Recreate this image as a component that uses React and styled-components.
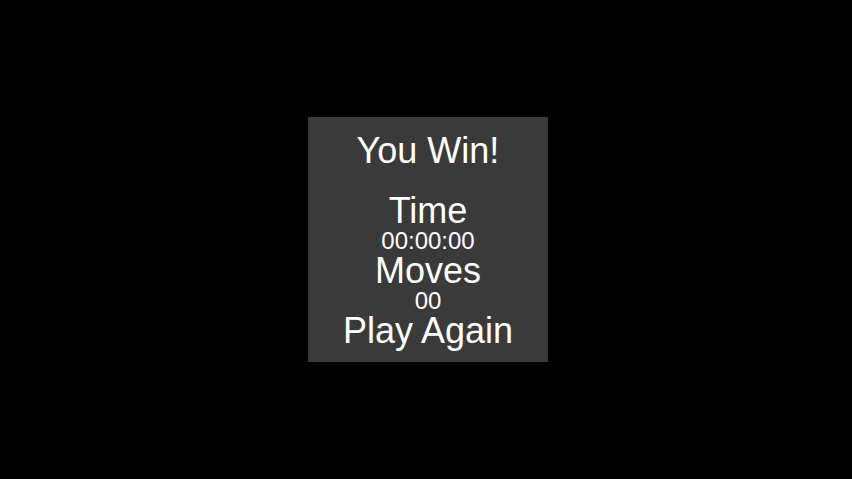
import React from 'react';
import styled, { createGlobalStyle } from 'styled-components';

const GlobalStyle = createGlobalStyle`
  html, body {
    margin: 0;
    padding: 0;
    background: #000;
  }
  body {
    font-family: 'Liberation Sans', Arial, sans-serif;
  }
`;

const Screen = styled.div`
  width: 100vw;
  height: 100vh;
  display: flex;
  align-items: center;
  justify-content: center;
  padding-left: 4px;
  box-sizing: border-box;
  background: #000;
`;

const Dialog = styled.div`
  width: 240px;
  box-sizing: border-box;
  padding: 16px 0 13px;
  background: #3a3a3a;
  color: #fff;
  display: flex;
  flex-direction: column;
  align-items: center;
  text-align: center;
`;

const Heading = styled.div`
  font-size: 36px;
  line-height: 36px;
  margin-bottom: ${(p) => (p.$spaced ? '24px' : '0')};
`;

const Value = styled.div`
  font-size: 24px;
  line-height: 24px;
`;

const PlayButton = styled.button`
  border: none;
  background: none;
  padding: 0;
  color: #fff;
  font-family: inherit;
  font-size: 36px;
  line-height: 36px;
  cursor: pointer;
`;

const App = ({ time = '00:00:00', moves = '00', onRestart }) => (
  <>
    <GlobalStyle />
    <Screen>
      <Dialog>
        <Heading $spaced>You Win!</Heading>
        <Heading>Time</Heading>
        <Value>{time}</Value>
        <Heading>Moves</Heading>
        <Value>{moves}</Value>
        <PlayButton onClick={onRestart}>Play Again</PlayButton>
      </Dialog>
    </Screen>
  </>
);

export default App;
